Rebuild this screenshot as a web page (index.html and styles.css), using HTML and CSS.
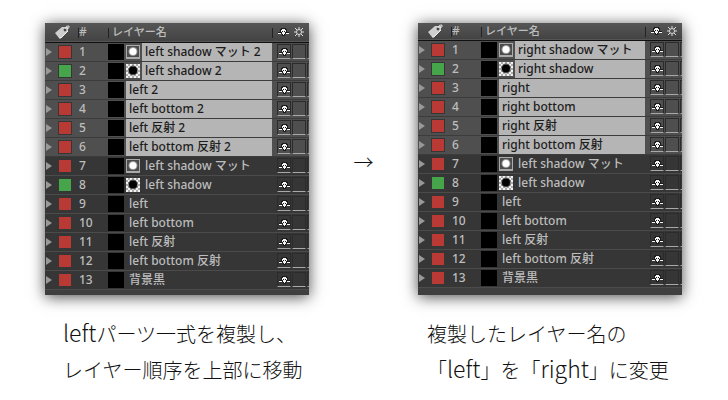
FILE: index.html
```html
<!DOCTYPE html>
<html lang="ja">
<head>
  <meta charset="UTF-8">
  <title>レイヤーの複製</title>
  <link rel="stylesheet" href="styles.css">
</head>
<body>
  <svg class="sprites" aria-hidden="true">
    <symbol id="tag" viewBox="0 0 16 14">
      <path d="M1 8 L8 2 L14 2 L14 6 L7 13 L5 13 Z" fill="#cfcfcf"/>
      <path d="M5 13 L7 13 L14 6" fill="none" stroke="#eee"/>
      <circle cx="11" cy="5" r="1.4" fill="#444"/>
      <path d="M11 4 Q12 0 15 1 Q16 3 13 4" fill="none" stroke="#e4e4e4"/>
    </symbol>
    <symbol id="shy" viewBox="0 0 11 8">
      <path d="M3 0h5v1h1v3h2v1h-2v1H7v2H4V6H2V5H0V4h2V1h1z" fill="#1c1c1c"/>
      <path d="M4 1h3v1H4zM3 2h5v1H3zM3 3h1v1H3zM5 3h1v1H5zM7 3h1v1H7zM4 4h3v1H4zM0 5h3v1H0zM8 5h3v1H8zM4 5h3v1H4zM5 6h1v1H5z" fill="#f4f4f4"/>
    </symbol>
    <symbol id="sun" viewBox="0 0 10 10">
      <circle cx="5" cy="5" r="2.5" fill="none" stroke="#ddd"/>
      <path d="M5 0v2M5 8v2M0 5h2M8 5h2M1 1l2 2M7 7l2 2M9 1L7 3M3 7L1 9" stroke="#ddd"/>
    </symbol>
    <symbol id="matte" viewBox="0 0 14 14">
      <rect width="14" height="14" fill="#aaa"/>
      <rect x="1" y="1" width="12" height="11" fill="#4c4c4c"/>
      <circle cx="7" cy="6.5" r="4.5" fill="#999"/>
      <circle cx="7" cy="6.5" r="3.5" fill="#fff"/>
    </symbol>
    <symbol id="shadow" viewBox="0 0 14 14">
      <rect width="14" height="14" fill="#f2f2f2"/>
      <path d="M2 0h2v2H2zM6 0h2v2H6zM10 0h2v2h-2zM0 2h2v2H0zM4 2h2v2H4zM8 2h2v2H8zM12 2h2v2h-2zM2 4h2v2H2zM10 4h2v2h-2zM0 6h2v2H0zM12 6h2v2h-2zM2 8h2v2H2zM10 8h2v2h-2zM0 10h2v2H0zM4 10h2v2H4zM8 10h2v2H8zM12 10h2v2h-2zM2 12h2v2H2zM6 12h2v2H6zM10 12h2v2h-2z" fill="#aaa"/>
      <circle cx="7" cy="6.5" r="5" fill="#333" opacity="0.6"/>
      <circle cx="7" cy="6.5" r="4" fill="#000"/>
    </symbol>
  </svg>

  <main class="steps">
    <figure class="step">
      <table class="layers" id="before"></table>
      <figcaption><span class="latin">left</span>パーツ一式を複製し、<br>レイヤー順序を上部に移動</figcaption>
    </figure>
    <div class="arrow">→</div>
    <figure class="step step-after">
      <table class="layers" id="after"></table>
      <figcaption>複製したレイヤー名の<br>「<span class="latin">left</span>」を「<span class="latin">right</span>」に変更</figcaption>
    </figure>
  </main>

  <script>
    const originals = ["left shadow マット", "left shadow", "left", "left bottom", "left 反射", "left bottom 反射", "背景黒"];
    const copies = originals.slice(0, 6);

    function icon(name) {
      return `<svg class="${name}" aria-hidden="true"><use href="#${name}"/></svg>`;
    }

    function layerRow(name, i) {
      const selected = i < 6;
      const kind = name.includes("マット") ? "matte" : name.includes("shadow") ? "shadow" : "";
      return `<tr class="${selected ? "selected" : ""}">
        <td><button class="toggle" aria-label="展開 ${i + 1}"></button></td>
        <td><span class="swatch ${kind === "shadow" ? "green" : ""}"></span></td>
        <td class="number">${i + 1}</td>
        <td><div class="source"><span class="thumb"></span>${kind ? icon(kind) : ""}<span class="name">${name}</span></div></td>
        <td><div class="switches">
          <button class="switch" aria-label="シャイ ${i + 1}">${icon("shy")}</button>
          <button class="switch" aria-label="コラップス ${i + 1}"></button>
          <span class="switch"></span>
        </div></td>
      </tr>`;
    }

    function drawLayers(id, names) {
      document.getElementById(id).innerHTML = `
        <colgroup><col class="col-toggle"><col class="col-label"><col class="col-number"><col><col class="col-switches"></colgroup>
        <thead><tr>
          <th colspan="2">${icon("tag")}</th>
          <th class="number">#</th>
          <th class="title">レイヤー名</th>
          <th><div class="switches">${icon("shy")}${icon("sun")}</div></th>
        </tr></thead>
        <tbody>${names.map(layerRow).join("")}</tbody>
        <tfoot><tr><td colspan="5"></td></tr></tfoot>`;
    }

    drawLayers("before", copies.map(n => n + " 2").concat(originals));
    drawLayers("after", copies.map(n => n.replace("left", "right")).concat(originals));
  </script>
</body>
</html>
```

FILE: styles.css
```css
* {
  box-sizing: border-box;
}

body {
  margin: 0;
  background: #fff;
  color: #111;
  font-family: "Noto Sans", "Noto Sans CJK JP", sans-serif;
}

.sprites {
  display: none;
}

svg {
  display: block;
  flex: none;
}

.steps {
  display: grid;
  grid-template-columns: 1fr 109px 1fr;
  padding: 23px 46px 0 45px;
}

.step {
  margin: 0;
}

.arrow,
figcaption {
  font: 200 20px/36px "Noto Sans CJK JP", sans-serif;
}

.arrow {
  padding-top: 121px;
  text-align: center;
}

figcaption {
  padding: 21px 0 0 18px;
  white-space: nowrap;
}

.step-after figcaption {
  padding-left: 9px;
}

.latin {
  font-size: 23px;
  line-height: 20px;
}

.layers {
  width: 100%;
  table-layout: fixed;
  border-collapse: collapse;
  background: #3f3f3f;
  box-shadow: 0 2px 14px rgba(0, 0, 0, 0.7);
  color: #bdbdbd;
  font-size: 12px;
  line-height: 18px;
}

.layers th,
.layers td {
  padding: 0;
  text-align: left;
  font-weight: 500;
}

.col-toggle { width: 13px; }
.col-label { width: 20px; }
.col-number { width: 30px; }
.col-switches { width: 37px; }

.layers thead tr {
  height: 19px;
  background: linear-gradient(#565656, #434343);
  border-bottom: 1px solid #111;
}

.step-after .layers thead tr {
  height: 17px;
}

.step-after .layers th {
  line-height: 16px;
}

.layers tbody tr {
  height: 19px;
  background: #363636;
  border-bottom: 1px solid #4b4b4b;
}

.layers tbody .selected {
  background: #4f4f4f;
  border-bottom-color: #3c3c3c;
}

.layers tfoot tr {
  height: 6px;
}

.step-after .layers tfoot tr {
  height: 8px;
}

thead th:not(:first-child) {
  background: linear-gradient(#222, #222) 0 60% / 1px 10px no-repeat;
}

.layers thead .title {
  padding-left: 4px;
  font-size: 11px;
}

.layers .number {
  padding-left: 1px;
}

.tag {
  width: 16px;
  height: 14px;
  margin-left: 9px;
}

.toggle {
  display: block;
  width: 0;
  height: 0;
  margin-left: 1px;
  padding: 0;
  background: none;
  border: 4px solid transparent;
  border-left: 6px solid #999;
  border-right: 0;
}

.swatch {
  display: block;
  width: 14px;
  height: 14px;
  background: #b93a35;
  border: 1px solid #363636;
}

.green {
  background: #46a54a;
}

.source {
  display: flex;
  align-items: center;
  height: 18px;
}

.thumb {
  flex: none;
  width: 16px;
  height: 16px;
  margin-right: 2px;
  background: #000;
}

.matte,
.shadow {
  width: 14px;
  height: 14px;
  margin-right: 2px;
}

.name {
  flex: 1;
  padding-left: 3px;
  white-space: nowrap;
}

.selected .name {
  background: #b5b5b5;
  color: #1c1c1c;
}

.switches {
  display: flex;
  align-items: center;
  gap: 1px;
  padding-left: 5px;
  overflow: hidden;
}

thead .switches {
  gap: 5px;
  padding-left: 6px;
}

.shy {
  width: 11px;
  height: 8px;
  shape-rendering: crispEdges;
}

.sun {
  width: 10px;
  height: 10px;
}

.switch {
  flex: none;
  display: flex;
  align-items: center;
  justify-content: center;
  width: 14px;
  height: 15px;
  padding: 0;
  background: none;
  border: 1px solid #2b2b2b;
  border-bottom-color: #a8a8a8;
}
```
